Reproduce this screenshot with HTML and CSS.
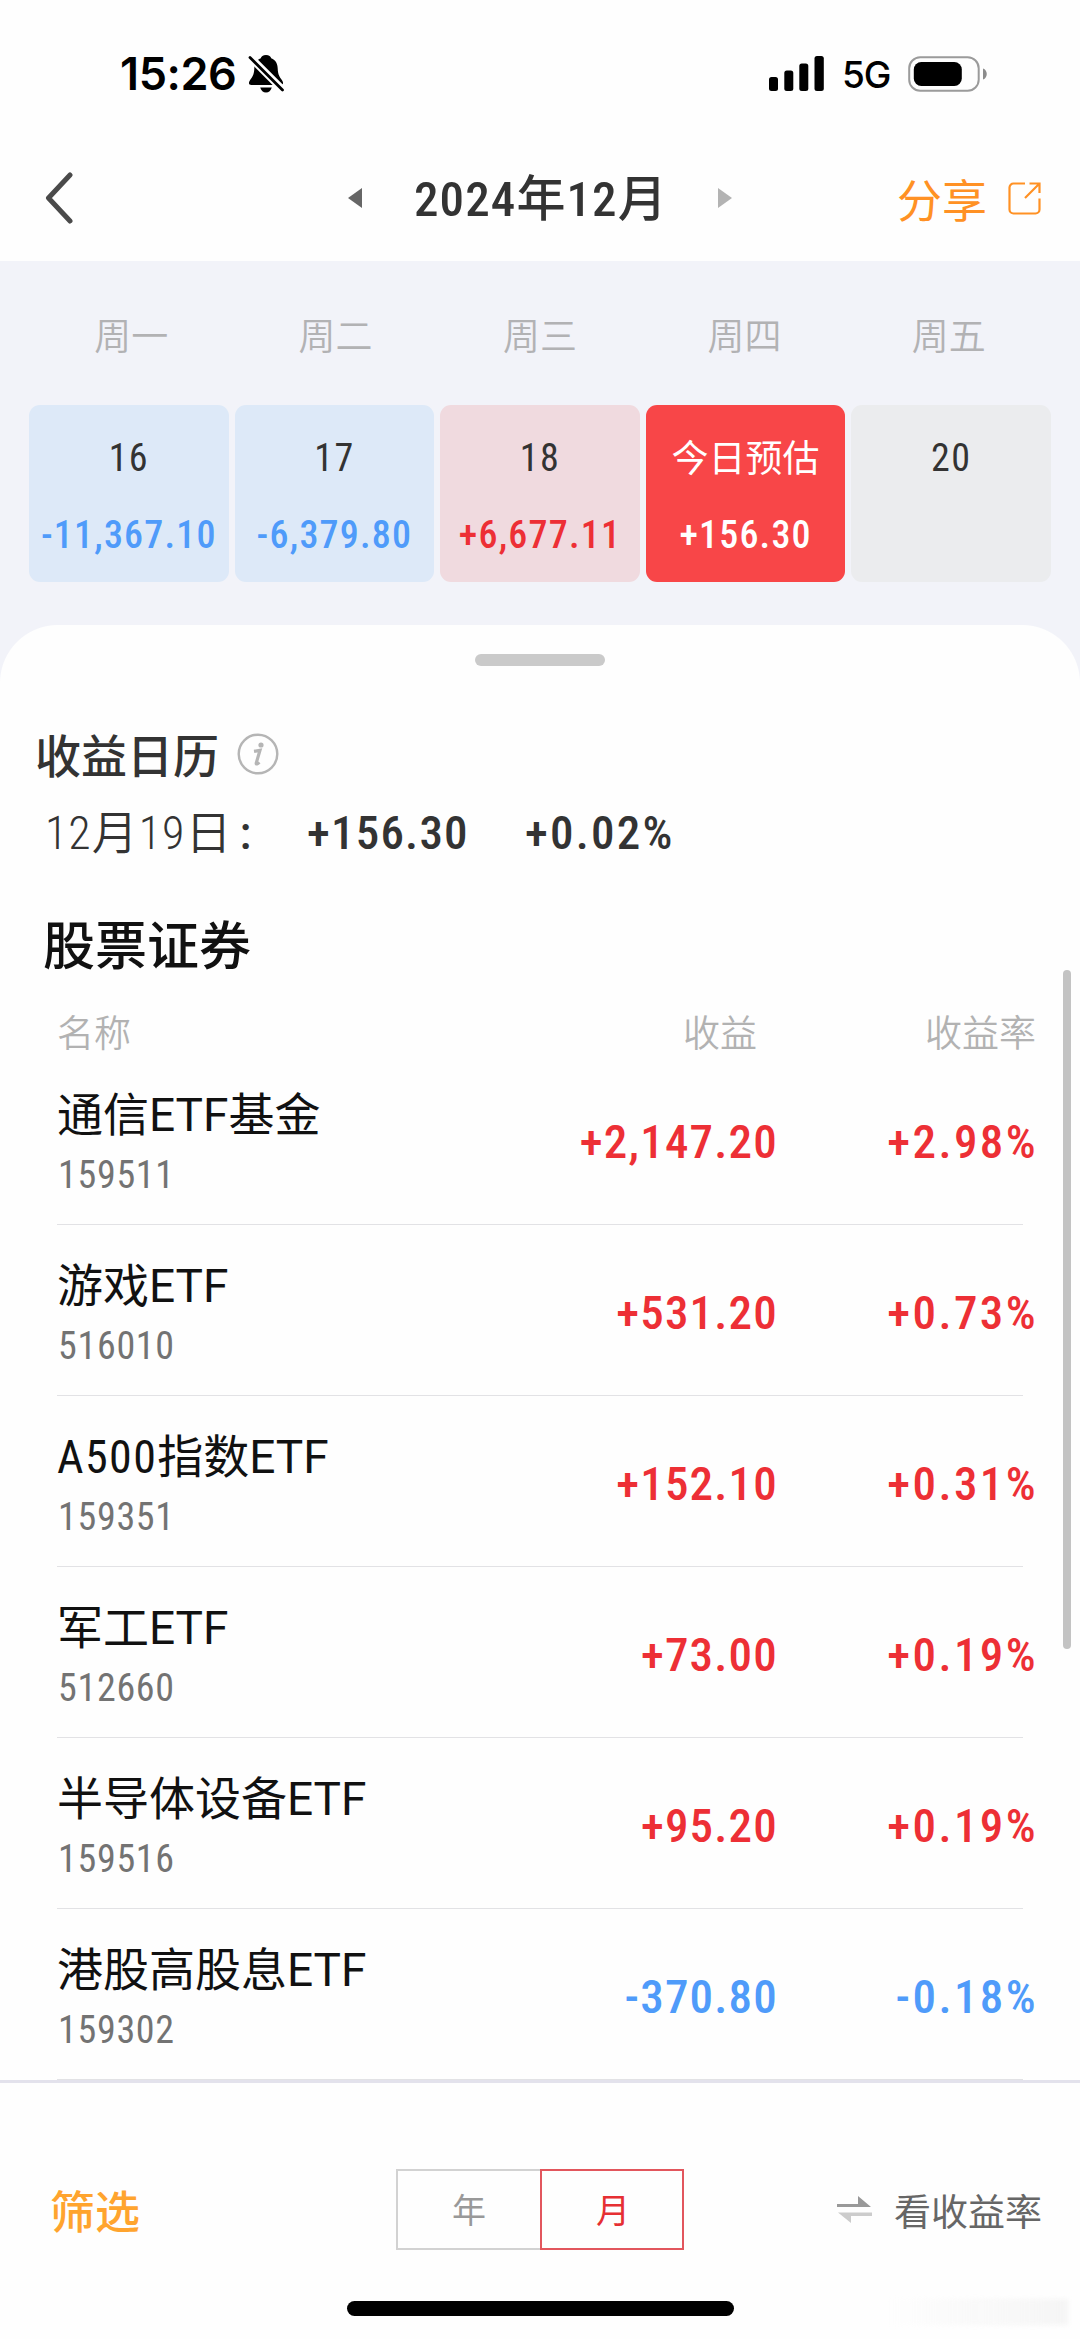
FILE: index.html
```html
<!DOCTYPE html>
<html lang="zh-CN">
<head>
<meta charset="utf-8">
<title>收益日历</title>
<link rel="stylesheet" href="styles.css">
</head>
<body>
<div class="screen">
  <header class="status">
    <span class="time">15:26</span>
    <svg class="bell" width="36" height="40" viewBox="0 0 36 40">
      <path d="M18 1c-3 0-4.800 1.400-5.200 3.200C8.200 6 6.400 9.800 6.300 14.500 6.100 21 4.300 23 2 26.200.2 28.800.6 31 3.500 31h29c2.900 0 3.300-2.200 1.500-4.800-2.300-3.200-4.100-5.200-4.300-11.700C29.600 9.800 27.800 6 23.200 4.200 22.800 2.400 21 1 18 1z"/>
      <path d="M12.200 33.500h11.600c-.8 3-3 5-5.800 5s-5-2-5.800-5z"/>
      <path d="M0 1L36 37" stroke="#fff" stroke-width="7.500"/>
      <path d="M2 3.500L34.500 36" stroke="#000" stroke-width="2.800" stroke-linecap="round"/>
    </svg>
    <svg class="signal" width="55" height="35" viewBox="0 0 55 35">
      <rect x="0" y="21" width="9" height="14" rx="2.500"/><rect x="15.300" y="14.500" width="9" height="20.500" rx="2.500"/><rect x="30.300" y="7.500" width="9" height="27.500" rx="2.500"/><rect x="45.500" y="0" width="9.300" height="35" rx="2.500"/>
    </svg>
    <span class="network">5G</span>
    <svg class="battery" width="80" height="36" viewBox="0 0 80 36">
      <rect x="1.200" y="1.200" width="69.500" height="33.600" rx="11" fill="none" stroke="#9b9b9b" stroke-width="2"/>
      <rect x="5.800" y="6" width="48" height="24" rx="7.500"/>
      <path d="M75 12.500c5 1.500 5 9.500 0 11z" fill="#8c8c8c"/>
    </svg>
  </header>

  <nav class="nav">
    <svg class="back" width="28" height="52" viewBox="0 0 28 52"><path d="M25 3L3.500 26 25 49" fill="none" stroke="#4a4a4a" stroke-width="5" stroke-linecap="round" stroke-linejoin="round"/></svg>
    <svg class="prev" width="14" height="20" viewBox="0 0 14 20"><path d="M14 0v20L0 10z" fill="#666"/></svg>
    <h1 class="month">2024年12月</h1>
    <svg class="next" width="14" height="20" viewBox="0 0 14 20"><path d="M0 0v20l14-10z" fill="#b3b3b3"/></svg>
    <a class="share"><span>分享</span>
      <svg width="33" height="33" viewBox="0 0 33 33" fill="none" stroke="#ff9124" stroke-width="2.200"><path d="M17 1.500H5.500a4 4 0 0 0-4 4v22a4 4 0 0 0 4 4h22a4 4 0 0 0 4-4V16.500M21.500 1.500h10V11M31.500 1.500L17 16"/></svg>
    </a>
  </nav>

  <section class="calendar">
    <div class="weekdays"><span>周一</span><span>周二</span><span>周三</span><span>周四</span><span>周五</span></div>
    <div class="days">
      <div class="day loss"><span class="date">16</span><span class="sum">-11,367.10</span></div>
      <div class="day loss"><span class="date">17</span><span class="sum">-6,379.80</span></div>
      <div class="day gain"><span class="date">18</span><span class="sum">+6,677.11</span></div>
      <div class="day today"><span class="date">今日预估</span><span class="sum">+156.30</span></div>
      <div class="day idle"><span class="date">20</span></div>
    </div>
  </section>

  <main class="sheet">
    <div class="handle"></div>
    <h2 class="title"><span>收益日历</span>
      <svg width="42" height="42" viewBox="0 0 42 42"><circle cx="21" cy="21" r="19.300" fill="none" stroke="#b5b5b5" stroke-width="2.400"/><circle cx="24" cy="12" r="2.600" fill="#b5b5b5"/><path d="M17 18.300l6-1-3.700 12.500c-.5 2 1.300 1.300 3-.6" fill="none" stroke="#b5b5b5" stroke-width="3.200"/></svg>
    </h2>
    <div class="summary"><span class="on">12月19日<span class="colon">:</span></span><b class="earned">+156.30</b><b class="rate">+0.02%</b></div>
    <h3 class="group">股票证券</h3>
    <div class="row head"><span>名称</span><span class="profit">收益</span><span class="percent">收益率</span></div>
    <div class="row item up"><div><div class="name">通信ETF基金</div><div class="code">159511</div></div><span class="profit">+2,147.20</span><span class="percent">+2.98%</span></div>
    <div class="row item up"><div><div class="name">游戏ETF</div><div class="code">516010</div></div><span class="profit">+531.20</span><span class="percent">+0.73%</span></div>
    <div class="row item up"><div><div class="name"><span class="narrow">A500</span>指数ETF</div><div class="code">159351</div></div><span class="profit">+152.10</span><span class="percent">+0.31%</span></div>
    <div class="row item up"><div><div class="name">军工ETF</div><div class="code">512660</div></div><span class="profit">+73.00</span><span class="percent">+0.19%</span></div>
    <div class="row item up"><div><div class="name">半导体设备ETF</div><div class="code">159516</div></div><span class="profit">+95.20</span><span class="percent">+0.19%</span></div>
    <div class="row item down"><div><div class="name">港股高股息ETF</div><div class="code">159302</div></div><span class="profit">-370.80</span><span class="percent">-0.18%</span></div>
    <div class="scrollbar"></div>
  </main>

  <footer class="toolbar">
    <a class="filter">筛选</a>
    <div class="switch"><span class="option">年</span><span class="option active">月</span></div>
    <a class="toggle">
      <svg width="35" height="28" viewBox="0 0 35 28"><path d="M0 8h21V0l13 11H0z" fill="#999"/><path d="M35 16.500H1L14 27v-7h21z" fill="#ccc"/></svg>
      <span>看收益率</span>
    </a>
    <div class="home"></div>
    <div class="smudge"></div>
  </footer>
</div>
</body>
</html>
```
FILE: styles.css
```css
* { box-sizing: border-box; }
body { margin: 0; background: #fff; }
h1, h2, h3 { margin: 0; font-weight: 500; }

.screen {
  position: relative;
  display: flex;
  flex-direction: column;
  width: 1080px;
  height: 2339px;
  overflow: hidden;
  background: #fefefe;
  color: #333;
  font-family: Roboto, "Noto Sans CJK SC", sans-serif;
  line-height: 60px;
  white-space: nowrap;
}
svg { display: block; flex: none; }

/* Status bar */
.status {
  display: flex;
  align-items: center;
  height: 147px;
  padding: 0 92px 0 120px;
  color: #000;
  font-family: Inter, sans-serif;
}
.time { width: 128px; font-size: 45px; font-weight: 600; letter-spacing: -0.4px; }
.signal { margin-left: auto; }
.network { width: 46px; margin: 0 21px 0 18px; padding-top: 3px; font-size: 37px; font-weight: 500; letter-spacing: -1px; }
.battery { margin-left: -1px; }

/* Navigation */
.nav {
  display: flex;
  align-items: center;
  height: 114px;
  padding: 0 39px 9px 45px;
}
.back { margin-bottom: 4px; }
.prev, .next { margin-bottom: 4px; }
.prev { margin-left: 275px; }
.month { width: 248px; margin-left: 52px; padding-top: 1px; font-size: 49px; font-stretch: 75%; letter-spacing: 1.1px; }
.next { margin-left: 56px; }
.share {
  display: flex;
  align-items: center;
  gap: 21px;
  margin-left: auto;
  color: #ff9124;
  font-size: 45px;
}
.share span { padding-top: 6px; }
.share svg { margin-bottom: 2px; }

/* Week strip */
.calendar {
  height: 364px;
  padding: 47px 29px 0;
  background: #f2f3f9;
}
.weekdays {
  display: grid;
  grid-template-columns: repeat(5, 1fr);
  margin-bottom: 37px;
  color: #b2b2b4;
  font-size: 37px;
  font-weight: 350;
  text-align: center;
}
.days { display: grid; grid-template-columns: repeat(5, 1fr); gap: 6px; }
.day {
  display: flex;
  flex-direction: column;
  align-items: center;
  gap: 17px;
  height: 177px;
  padding-top: 23px;
  border-radius: 11px;
  font-size: 38px;
  font-stretch: 75%;
}
.date { letter-spacing: 1.4px; }
.sum { font-weight: 500; letter-spacing: 1.2px; }
.loss { background: #dde9f8; }
.loss .sum { color: #4f9bfa; }
.gain { background: #f0dadf; }
.gain .sum { color: #ed2f35; }
.today { background: #f84648; color: #fff; }
.today .date { padding-top: 2px; margin-bottom: -2px; font-size: 37px; letter-spacing: 0; }
.idle { background: #ebecee; }

/* Detail sheet */
.sheet {
  position: relative;
  height: 1455px;
  padding-top: 29px;
  background: radial-gradient(circle at 58px 58px, #fefefe 57.500px, #f2f3f9 58.500px) 0 0 / 58px 58px no-repeat,
    radial-gradient(circle at 0 58px, #fefefe 57.500px, #f2f3f9 58.500px) 100% 0 / 58px 58px no-repeat, #fefefe;
}
.handle { width: 130px; height: 12px; margin: 0 auto; border-radius: 6px; background: #cacaca; }
.title {
  display: flex;
  align-items: center;
  gap: 18px;
  height: 60px;
  margin: 58px 0 0 35px;
  font-size: 46px;
}
.title span { padding-top: 5px; }
.summary {
  display: flex;
  height: 60px;
  margin: 19px 0 0 45px;
  font-size: 47px;
  font-stretch: 75%;
  letter-spacing: 1.2px;
}
.on { width: 262px; font-size: 46px; font-weight: 350; letter-spacing: 1px; }
.colon { margin-left: 7px; font-weight: 500; }
.summary b { font-weight: 500; }
.earned { width: 218px; }
.rate { letter-spacing: 2.2px; }
.group { margin: 55px 0 0 43px; color: #111; font-size: 52px; }
.row {
  display: grid;
  grid-template-columns: 1fr 260px 260px;
  margin: 0 57px;
}
.profit, .percent { text-align: right; }
.head {
  height: 76px;
  padding-top: 27px;
  color: #b2b2b2;
  font-size: 37px;
  font-weight: 350;
}
.head .profit { margin-right: 6px; }
.head .percent { margin-right: -13px; }
.item { height: 171px; padding-top: 31px; border-bottom: 1px solid #e2e2e5; }
.item .profit, .item .percent { padding-top: 27px; font-size: 47px; font-weight: 500; font-stretch: 75%; letter-spacing: 1.2px; }
.item .profit { margin-right: -15px; }
.item .percent { margin-right: -15px; letter-spacing: 2.4px; }
.name { color: #111; font-size: 46px; }
.narrow { font-stretch: 75%; letter-spacing: 1.4px; }
.code { padding-left: 1px; color: #737373; font-size: 38px; font-stretch: 75%; letter-spacing: 0.7px; }
.up { color: #ed2f35; }
.down { color: #4f9bfa; }
.scrollbar { position: absolute; top: 345px; left: 1063px; width: 8px; height: 679px; border-radius: 4px; background: #c3c3c3; }

/* Bottom bar */
.toolbar {
  position: relative;
  display: flex;
  align-items: center;
  height: 259px;
  padding: 0 38px 0 50px;
  border-top: 3px solid #e3e2ec;
}
.filter, .switch, .toggle { margin-bottom: 3px; }
.filter { width: 346px; padding-top: 9px; color: #ffa42e; font-size: 45px; font-weight: 500; }
.switch { display: flex; font-size: 34px; text-align: center; }
.option { width: 144px; height: 81px; border: 2px solid #d2d2d2; color: #999; line-height: 81px; }
.option.active { padding-left: 2px; border-color: #e2565d; color: #e62f33; }
.option:first-child { border-right: 0; }
.toggle { display: flex; align-items: center; gap: 22px; margin-left: auto; color: #666; font-size: 37px; }
.toggle span { padding-top: 9px; }
.home { position: absolute; left: 347px; bottom: 23px; width: 387px; height: 15px; border-radius: 8px; background: #000; }
.smudge { position: absolute; right: 12px; bottom: 14px; width: 180px; height: 26px; background: linear-gradient(90deg, transparent, #f5f5f5); filter: blur(2px); }
```
